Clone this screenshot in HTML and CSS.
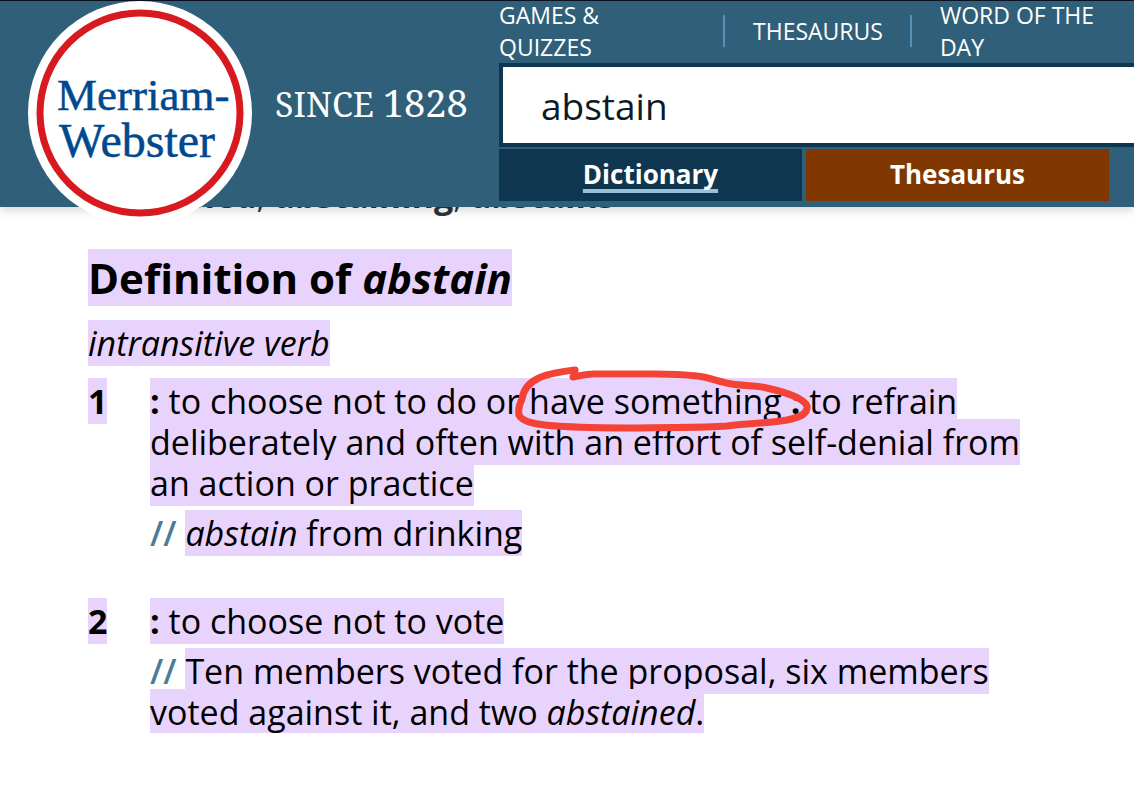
FILE: index.html
```html
<!DOCTYPE html>
<html lang="en">
<head>
<meta charset="utf-8">
<title>Abstain - Definition</title>
<link rel="stylesheet" href="styles.css">
</head>
<body>
<header class="header">
  <a class="logo" href="#" aria-label="Merriam-Webster">
    <svg class="logo-mark" viewBox="0 0 224 224">
      <circle cx="112" cy="112" r="112" fill="#fff"/>
      <circle cx="112" cy="112" r="100" fill="#fff" stroke="#d71920" stroke-width="7"/>
      <text class="logo-text" x="29" y="109">Merriam-</text>
      <text class="logo-text logo-text-second" x="31" y="156">Webster</text>
    </svg>
  </a>
  <p class="since">SINCE <span class="year">1828</span></p>
  <div class="tools">
    <nav class="nav">
      <a class="nav-link" href="#">GAMES &amp; QUIZZES</a>
      <a class="nav-link" href="#"><span class="nav-label">THESAURUS</span></a>
      <a class="nav-link" href="#">WORD OF THE DAY</a>
    </nav>
    <input class="search" type="text" value="abstain" aria-label="Search">
    <div class="tabs">
      <button class="tab tab-dictionary" type="button"><span class="tab-label">Dictionary</span></button>
      <button class="tab tab-thesaurus" type="button">Thesaurus</button>
    </div>
  </div>
</header>
<main class="entry">
  <p class="inflections"><b>abstained</b>, <b>abstaining</b>, <b>abstains</b></p>
  <h1 class="title"><mark>Definition of <em>abstain</em></mark></h1>
  <p class="verb"><mark><em>intransitive verb</em></mark></p>
  <section class="sense">
    <div class="number"><mark>1</mark></div>
    <div class="sense-body">
      <p class="meaning"><mark><b>:</b> to choose not to do or <span class="circled">have something <b>:</b><svg class="scribble" viewBox="0 0 300 68" aria-hidden="true"><path d="M61 5C44 7 31 9 23 14C13 19 9 27 8 34C5 40 4 45 5 50C8 57 24 60 43 61C70 63 100 63 123 63C155 62 185 63 213 61C240 58 256 58 273 55C288 52 294 48 293 41C290 33 274 28 253 23C240 20 229 21 218 19C205 17 195 12 183 11C165 9 155 9 140 9L80 9C72 9 65 11 59 12" fill="none" stroke="#f44336" stroke-width="7" stroke-linejoin="round" stroke-linecap="round"/></svg></span> to refrain deliberately and often with an effort of self-denial from an action or practice</mark></p>
      <p class="example"><span class="slashes">//</span> <mark><em>abstain</em> from drinking</mark></p>
    </div>
  </section>
  <section class="sense">
    <div class="number"><mark>2</mark></div>
    <div class="sense-body">
      <p class="meaning"><mark><b>:</b> to choose not to vote</mark></p>
      <p class="example"><span class="slashes">//</span> <mark>Ten members voted for the proposal, six members voted against it, and two <em>abstained</em>.</mark></p>
    </div>
  </section>
</main>
</body>
</html>
```
FILE: styles.css
```css
* {
  box-sizing: border-box;
}

body {
  margin: 0;
  overflow-x: hidden;
  background: #fff;
  color: #000;
  font-family: "Open Sans", "Noto Sans", sans-serif;
  font-size: 34px;
  line-height: 41px;
}

p,
h1 {
  margin: 0;
}

.header {
  position: relative;
  z-index: 2;
  display: flex;
  height: 207px;
  padding-left: 28px;
  border-top: 1px solid #0b1020;
  background: #305f79;
  box-shadow: 0 2px 10px rgba(0, 0, 0, 0.2);
}

.logo {
  flex: none;
  width: 224px;
  height: 224px;
}

.logo-mark {
  display: block;
}

.logo-text {
  fill: #00498f;
  stroke: #00498f;
  stroke-width: 0.5px;
  font-family: "Liberation Serif", serif;
  font-size: 45px;
}

.logo-text-second {
  font-size: 48px;
}

.since {
  flex: none;
  width: 224px;
  margin-top: 81px;
  margin-left: 23px;
  color: #fff;
  font-family: "Noto Serif", "Liberation Serif", serif;
  font-size: 34px;
  white-space: nowrap;
}

.year {
  font-size: 38px;
}

.tools {
  flex: 1;
  min-width: 0;
}

.nav {
  display: flex;
  align-items: center;
  height: 62px;
  padding-bottom: 2px;
}

.nav-link {
  color: #fff;
  font-size: 23px;
  line-height: 32px;
  text-decoration: none;
}

.nav-link:first-child {
  width: 224px;
  padding-right: 100px;
}

.nav-label {
  display: block;
  padding: 0 27px 0 28px;
  border: solid #5590b5;
  border-width: 0 2px;
}

.nav-link:last-child {
  flex: 1;
  padding: 0 28px;
}

.search {
  display: block;
  width: calc(100% + 4px);
  height: 84px;
  padding: 0 38px;
  border: 4px solid #0f364f;
  background: #fff;
  color: #0b1a26;
  font: 37px "Open Sans", sans-serif;
}

.tabs {
  display: flex;
  gap: 4px;
  margin-top: 2px;
  margin-right: 25px;
}

.tab {
  flex: 1;
  height: 52px;
  padding: 0 0 2px;
  border: 0;
  color: #fff;
  font: bold 26px/34px "Open Sans", sans-serif;
}

.tab-dictionary {
  background: #0f364f;
}

.tab-thesaurus {
  background: #803700;
}

.tab-label {
  text-decoration: underline 4px #97c1d8;
  text-decoration-skip-ink: none;
  text-underline-offset: 5px;
}

.entry {
  padding: 0 88px;
}

.inflections {
  margin-top: -32px;
  color: #303336;
}

mark {
  background: #e8d3fd;
  color: inherit;
}

.title {
  margin-top: 34px;
  font-size: 42px;
  line-height: 56px;
}

.verb {
  margin-top: 17px;
}

.sense {
  display: grid;
  grid-template-columns: 62px 1fr;
  margin-top: 17px;
}

.sense + .sense {
  margin-top: 47px;
}

.number {
  font-weight: bold;
}

.example {
  margin-top: 9px;
}

.slashes {
  color: #4a7d95;
  font-weight: 600;
}

.circled {
  position: relative;
}

.scribble {
  position: absolute;
  top: -13px;
  left: -15px;
  width: 300px;
  height: 68px;
}
```
